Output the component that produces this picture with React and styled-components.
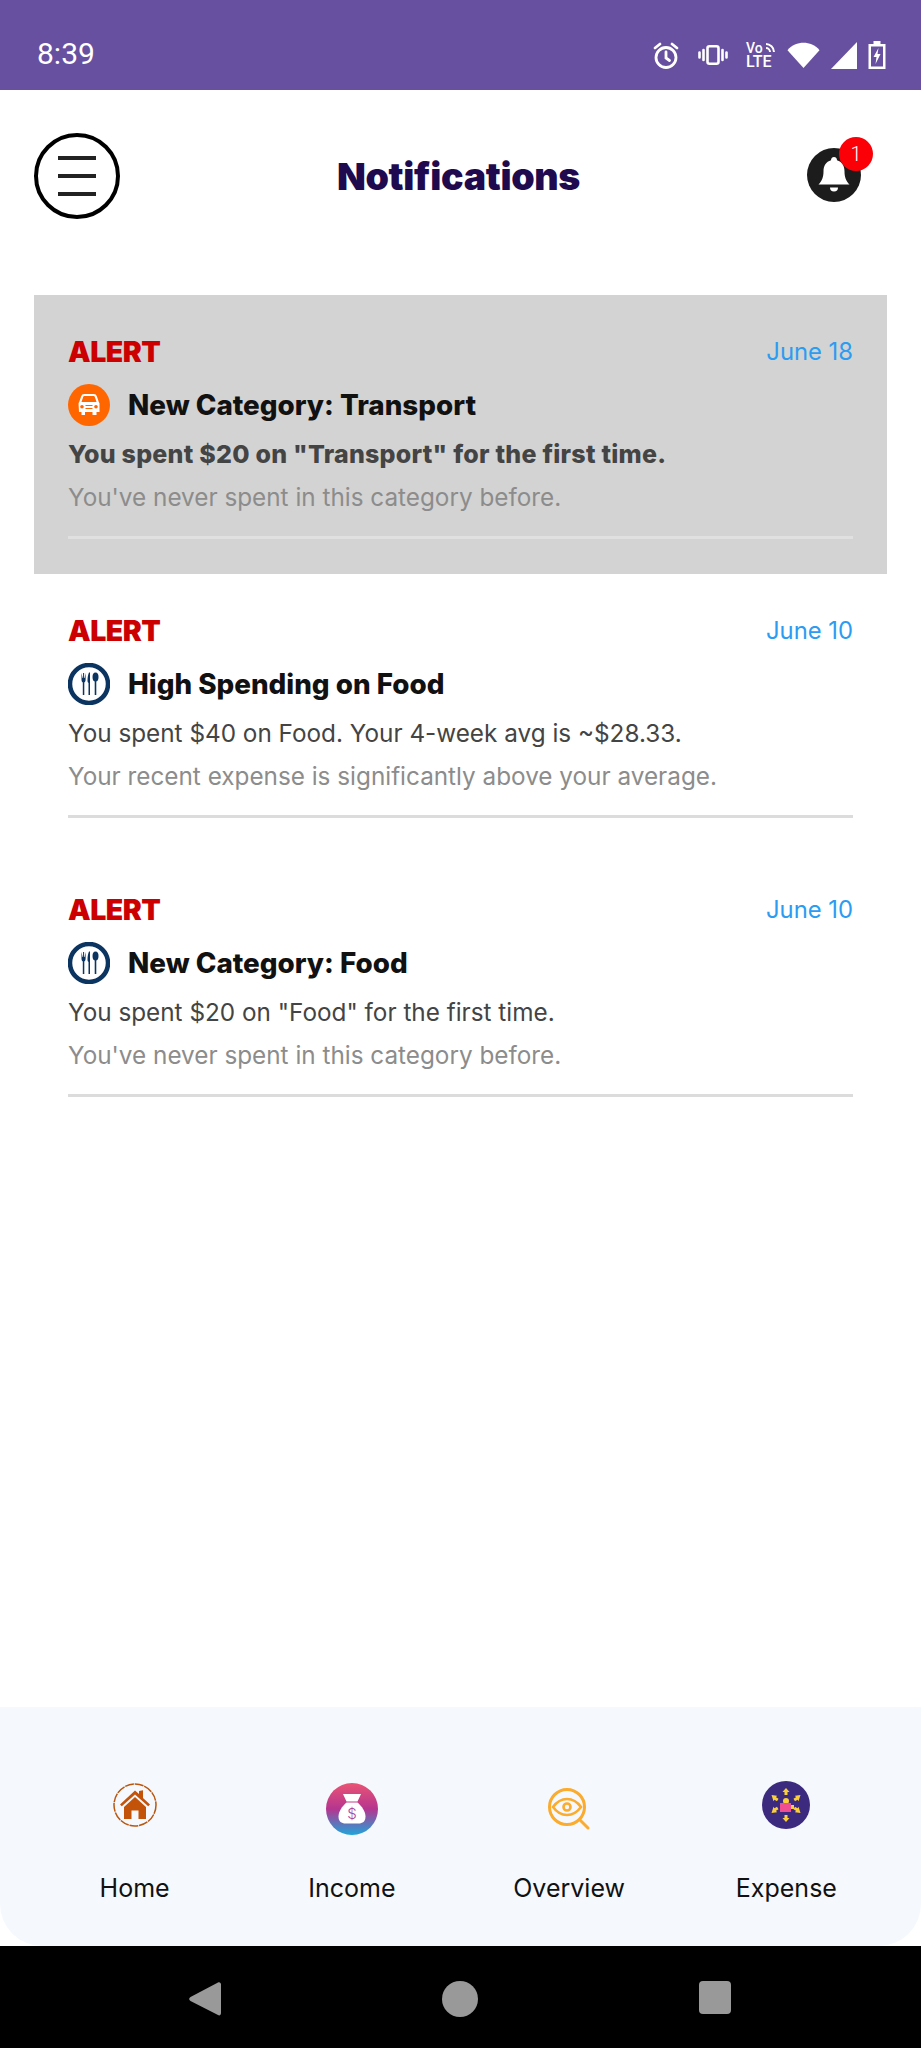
import React from 'react';
import styled, { createGlobalStyle } from 'styled-components';

const Global = createGlobalStyle`
  html, body { margin: 0; padding: 0; background: #fff; }
  * { box-sizing: border-box; }
  body { font-family: Inter, "Noto Sans", sans-serif; }
`;

const Page = styled.div`
  width: 921px;
  height: 2048px;
  display: flex;
  flex-direction: column;
  overflow: hidden;
`;

const StatusBar = styled.div`
  height: 90px;
  flex: none;
  background: #67509f;
  color: #fff;
  padding: 20px 35px 0 37px;
  display: flex;
  align-items: center;
  justify-content: space-between;
`;

const Clock = styled.div`
  margin-top: -3px;
  font-family: Roboto, sans-serif;
  font-size: 30px;
`;

const StatusIcons = styled.div`
  display: flex;
  align-items: center;
  gap: ${props => props.$gap}px;
`;

const Volte = styled.div`
  position: relative;
  width: 30px;
  font-family: Roboto, sans-serif;
  font-weight: 500;
  color: #fff;
`;

const VolteLine = styled.div`
  font-size: ${props => props.$size}px;
  line-height: 13px;
`;

const VolteWaves = styled.svg`
  position: absolute;
  top: 0;
  right: 0;
`;

const Header = styled.div`
  height: 205px;
  flex: none;
  padding: 43px 34px 0;
  display: flex;
  align-items: flex-start;
  justify-content: space-between;
`;

const MenuButton = styled.div`
  width: 86px;
  height: 86px;
  border: 4px solid #000;
  border-radius: 50%;
  display: flex;
  flex-direction: column;
  align-items: center;
  justify-content: center;
  gap: 14px;
`;

const MenuLine = styled.span`
  width: 38px;
  height: 4px;
  background: #222;
`;

const Title = styled.h1`
  margin: 23px 0 0 -10px;
  font-size: 37.5px;
  line-height: 42px;
  font-weight: 900;
  color: #1f0a4f;
  letter-spacing: -0.3px;
`;

const BellWrap = styled.div`
  position: relative;
  width: 54px;
  height: 54px;
  margin: 15px 26px 0 0;
  border-radius: 50%;
  background: #1c1c1c;
  display: flex;
  align-items: center;
  justify-content: center;
`;

const Badge = styled.span`
  position: absolute;
  top: -11px;
  right: -12px;
  width: 34px;
  height: 34px;
  border-radius: 50%;
  background: #fb0007;
  color: #fff;
  font-family: Roboto, sans-serif;
  font-size: 20px;
  font-weight: 300;
  display: flex;
  align-items: center;
  justify-content: center;
`;

const List = styled.div`
  flex: 1;
  padding: 0 34px;
`;

const Card = styled.div`
  height: 279px;
  padding: 37px 34px 0;
  background: ${props => (props.$unread ? '#d3d3d3' : '#fff')};
`;

const TopRow = styled.div`
  display: flex;
  justify-content: space-between;
  align-items: center;
  height: 38px;
`;

const AlertLabel = styled.span`
  font-size: 28.5px;
  font-weight: 900;
  color: #cc0000;
  letter-spacing: -0.5px;
`;

const DateLabel = styled.span`
  font-size: 23.8px;
  color: #2b9cf2;
`;

const TitleRow = styled.div`
  display: flex;
  align-items: center;
  gap: 18px;
  margin-top: 14px;
  height: 42px;
`;

const CardTitle = styled.div`
  font-size: 27.8px;
  font-weight: 800;
  color: #111;
`;

const Message = styled.div`
  margin-top: 10px;
  height: 36px;
  line-height: 36px;
  font-size: ${props => (props.$unread ? 25 : 24.3)}px;
  font-weight: ${props => (props.$unread ? 800 : 400)};
  letter-spacing: ${props => (props.$unread ? 0.25 : 0)}px;
  color: #444;
  white-space: nowrap;
`;

const Hint = styled.div`
  margin-top: 7px;
  height: 36px;
  line-height: 36px;
  font-size: 24.3px;
  color: #8c8c8c;
  white-space: nowrap;
`;

const Divider = styled.div`
  margin-top: 21px;
  height: 3px;
  background: ${props => (props.$unread ? '#e0e0e0' : '#dcdcdc')};
`;

const TabBar = styled.div`
  height: 239px;
  flex: none;
  background: #f5f8fd;
  border-radius: 0 0 42px 42px;
  padding: 0 26px;
  display: grid;
  grid-template-columns: repeat(4, 1fr);
`;

const Tab = styled.div`
  display: flex;
  flex-direction: column;
  align-items: center;
`;

const TabIcon = styled.div`
  height: 165px;
  padding-top: ${props => props.$top}px;
`;

const TabLabel = styled.div`
  font-size: 25px;
  line-height: 32px;
  color: #111;
`;

const NavBar = styled.div`
  height: 102px;
  flex: none;
  background: #000;
  display: flex;
  align-items: flex-start;
  justify-content: space-between;
  padding: 35px 190px 0 189px;
`;

const AlarmIcon = () => (
  <svg width="28" height="27" viewBox="0 0 28 27" fill="none" stroke="#fff" strokeWidth="2.8" strokeLinecap="round">
    <circle cx="14" cy="15.500" r="10" />
    <path d="M14 10v6l3.500 2.500M3 6l5-4M25 6l-5-4" />
  </svg>
);

const VibrateIcon = () => (
  <svg width="30" height="20" viewBox="0 0 30 20" fill="none" stroke="#fff" strokeWidth="2.6" strokeLinecap="round">
    <rect x="9.500" y="1.300" width="11" height="17.400" rx="2" />
    <path d="M5.500 5v10M1.500 7.500v5M24.500 5v10M28.500 7.500v5" />
  </svg>
);

const VolteIcon = () => (
  <Volte>
    <VolteLine $size={14}>Vo</VolteLine>
    <VolteLine $size={16}>LTE</VolteLine>
    <VolteWaves width="12" height="12" viewBox="0 0 12 12" fill="none">
      <path d="M2 2c4 0 8 3.500 8 8M2 6c2 0 4 1.800 4 4" stroke="#fff" strokeWidth="2" />
    </VolteWaves>
  </Volte>
);

const WifiIcon = () => (
  <svg width="33" height="28" viewBox="0 0 34 28">
    <path d="M17 27.500 0.500 9C5 4 11 1.500 17 1.500S29 4 33.500 9z" fill="#fff" />
  </svg>
);

const SignalIcon = () => (
  <svg width="26" height="27" viewBox="0 0 26 27">
    <path d="M26 0v27H0z" fill="#fff" />
  </svg>
);

const BatteryIcon = () => (
  <svg width="18" height="28" viewBox="0 0 17 28">
    <path d="M5 0h7v3h5v25H0V3h5z" fill="#fff" />
    <rect x="2.500" y="5.500" width="12" height="20" fill="#67509f" />
    <path d="M10 7 5 16h3l-1 7 5-10H9z" fill="#fff" />
  </svg>
);

const BellIcon = () => (
  <svg width="34" height="38" viewBox="0 0 34 38">
    <path d="M17 1c2 0 3 1.500 3 3.200 5 1.500 7.500 5.500 7.500 11 0 6 1.500 9.500 5 13.300H1.500c3.500-3.800 5-7.300 5-13.300 0-5.500 2.500-9.500 7.500-11C14 2.500 15 1 17 1z" fill="#fff" />
    <path d="M13 31.500h8a4 4 0 0 1-8 0z" fill="#fff" />
  </svg>
);

const CarIcon = () => (
  <svg width="42" height="42" viewBox="0 0 42 42">
    <circle cx="21" cy="21" r="21" fill="#ff6600" />
    <path d="M12 19l2.200-6.500c.3-.9 1-1.500 2-1.500h9.600c1 0 1.700.6 2 1.500L30 19" fill="none" stroke="#fff" strokeWidth="2.200" />
    <path d="M10.500 19.500c0-1 .8-1.500 1.500-1.500h18c.7 0 1.500.5 1.500 1.500V28h-3v3h-4v-3h-7.500v3h-3.500v-3h-2.500z" fill="#fff" />
    <circle cx="14" cy="22.700" r="1.800" fill="#ff6600" />
    <circle cx="28" cy="22.700" r="1.800" fill="#ff6600" />
    <path d="M17.500 21.500h7M17.500 24.500h7" stroke="#ff6600" strokeWidth="1.200" />
  </svg>
);

const CutleryIcon = () => (
  <svg width="42" height="42" viewBox="0 0 42 42">
    <circle cx="21" cy="21" r="19" fill="#fff" stroke="#0b3560" strokeWidth="4.500" />
    <path d="M13.500 10v6.500c0 1.500.5 2.500 1.300 3V32h1.500V19.500c.8-.5 1.300-1.500 1.300-3V10l-1 5h-.5v-5h-1v5h-.5z" fill="#0b3560" />
    <path d="M21 9.500c-1 2-1.500 5-1.500 8 0 1.500.5 2 1 2.500v12H22V9.500z" fill="#0b3560" />
    <ellipse cx="27.500" cy="14" rx="3" ry="4.500" fill="#0b3560" />
    <rect x="26.700" y="17" width="1.600" height="15" fill="#0b3560" />
  </svg>
);

const HomeIcon = () => (
  <svg width="44" height="44" viewBox="0 0 44 44">
    <circle cx="22" cy="22" r="21" fill="none" stroke="#b9560f" strokeWidth="1.500" strokeDasharray="9 0.800" />
    <path d="M7 21.500 22 7.500l4 3.500V8l4-.8V15l7 6.500-1.800 1.800L22 11.500 8.800 23.300z" fill="#c4530a" />
    <path d="M11 24 22 14l11 10v12h-7.500v-8.500h-7V36H11z" fill="#c4530a" />
  </svg>
);

const BagIcon = () => (
  <svg width="52" height="52" viewBox="0 0 52 52">
    <defs>
      <linearGradient id="bag" x1="0" y1="0" x2="0" y2="1">
        <stop offset="0" stopColor="#ea5474" />
        <stop offset="0.5" stopColor="#b5358f" />
        <stop offset="1" stopColor="#1fa5da" />
      </linearGradient>
    </defs>
    <circle cx="26" cy="26" r="26" fill="url(#bag)" />
    <path d="M17 11h18l-3.500 7.500H20.500z" fill="#fff" />
    <path d="M20.500 19.500h11c4.500 4 8 9 8 14 0 5-3 7-7 7h-13c-4 0-7-2-7-7 0-5 3.500-10 8-14z" fill="#fff" />
    <text x="26" y="36" textAnchor="middle" fontFamily="Inter, sans-serif" fontSize="15" fontWeight="300" fill="#a44aa0">$</text>
  </svg>
);

const EyeIcon = () => (
  <svg width="42" height="42" viewBox="0 0 42 42" fill="none" stroke="#fbab2d" strokeLinecap="round">
    <circle cx="19" cy="19" r="17.500" strokeWidth="3" />
    <path d="M5 19c4-5.500 9-8 14-8s10 2.500 14 8c-4 5.500-9 8-14 8S9 24.500 5 19z" strokeWidth="2.600" />
    <circle cx="19" cy="19" r="3.500" strokeWidth="2.600" />
    <path d="M32 32l8 8" strokeWidth="3" />
  </svg>
);

const ExpenseIcon = () => (
  <svg width="48" height="48" viewBox="0 0 48 48">
    <circle cx="24" cy="24" r="24" fill="#3c2a7f" />
    <g fill="#fbcf3a">
      <circle cx="24" cy="20" r="3" />
      <path d="M24 7l3.500 4h-2v3h-3v-3h-2z" />
      <path d="M24 41l3.500-4h-2v-3h-3v3h-2z" />
      <path d="M9.500 14l5.500.8-1 1.500 2.500 1.500-1.500 2.500-2.500-1.500-1 1.500z" />
      <path d="M38.500 14l-5.500.8 1 1.500-2.500 1.500 1.500 2.500 2.500-1.500 1 1.500z" />
      <path d="M9.500 32l5.500-.8-1-1.500 2.500-1.500-1.500-2.500-2.500 1.500-1-1.500z" />
      <path d="M38.500 32l-5.500-.8 1-1.500-2.500-1.500 1.500-2.500 2.500 1.500 1-1.500z" />
    </g>
    <rect x="18" y="22" width="11" height="9" fill="#ef4f91" />
    <rect x="29" y="24" width="3" height="4" fill="#fbcf3a" />
  </svg>
);

const items = [
  {
    unread: true,
    date: 'June 18',
    icon: <CarIcon />,
    title: 'New Category: Transport',
    message: 'You spent $20 on "Transport" for the first time.',
    hint: "You've never spent in this category before.",
  },
  {
    date: 'June 10',
    icon: <CutleryIcon />,
    title: 'High Spending on Food',
    message: 'You spent $40 on Food. Your 4-week avg is ~$28.33.',
    hint: 'Your recent expense is significantly above your average.',
  },
  {
    date: 'June 10',
    icon: <CutleryIcon />,
    title: 'New Category: Food',
    message: 'You spent $20 on "Food" for the first time.',
    hint: "You've never spent in this category before.",
  },
];

const tabs = [
  { label: 'Home', icon: <HomeIcon />, top: 76 },
  { label: 'Income', icon: <BagIcon />, top: 76 },
  { label: 'Overview', icon: <EyeIcon />, top: 81 },
  { label: 'Expense', icon: <ExpenseIcon />, top: 74 },
];

const App = () => (
  <Page>
    <Global />
    <StatusBar>
      <Clock>8:39</Clock>
      <StatusIcons $gap={11}>
        <StatusIcons $gap={18}>
          <AlarmIcon />
          <VibrateIcon />
          <VolteIcon />
        </StatusIcons>
        <WifiIcon />
        <SignalIcon />
        <BatteryIcon />
      </StatusIcons>
    </StatusBar>
    <Header>
      <MenuButton>
        <MenuLine />
        <MenuLine />
        <MenuLine />
      </MenuButton>
      <Title>Notifications</Title>
      <BellWrap>
        <BellIcon />
        <Badge>1</Badge>
      </BellWrap>
    </Header>
    <List>
      {items.map((item) => (
        <Card key={item.title} $unread={item.unread}>
          <TopRow>
            <AlertLabel>ALERT</AlertLabel>
            <DateLabel>{item.date}</DateLabel>
          </TopRow>
          <TitleRow>
            {item.icon}
            <CardTitle>{item.title}</CardTitle>
          </TitleRow>
          <Message $unread={item.unread}>{item.message}</Message>
          <Hint>{item.hint}</Hint>
          <Divider $unread={item.unread} />
        </Card>
      ))}
    </List>
    <TabBar>
      {tabs.map((tab) => (
        <Tab key={tab.label}>
          <TabIcon $top={tab.top}>{tab.icon}</TabIcon>
          <TabLabel>{tab.label}</TabLabel>
        </Tab>
      ))}
    </TabBar>
    <NavBar>
      <svg width="32" height="36" viewBox="0 0 32 36">
        <path d="M29 1.500c1.500-.8 3 .2 3 2v28.500c0 2-1.500 3-3 2L1.500 20c-1.800-1-1.800-3 0-4z" fill="#999" />
      </svg>
      <svg width="36" height="36" viewBox="0 0 36 36">
        <circle cx="18" cy="18" r="18" fill="#999" />
      </svg>
      <svg width="32" height="33" viewBox="0 0 32 33">
        <rect width="32" height="33" rx="4" fill="#999" />
      </svg>
    </NavBar>
  </Page>
);

export default App;
